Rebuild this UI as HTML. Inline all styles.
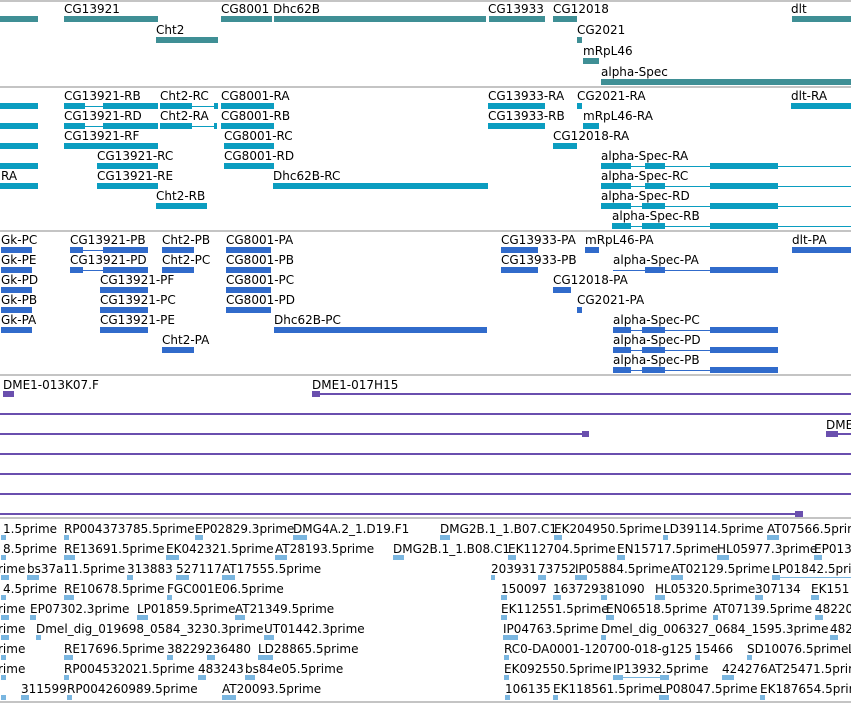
<!DOCTYPE html>
<html><head><meta charset="utf-8"><style>
body{margin:0;width:851px;height:703px;background:#fff;position:relative;overflow:hidden}
.t{position:absolute;font:12px/14px "DejaVu Sans","Liberation Sans",sans-serif;white-space:nowrap;color:#000;margin-top:1px}
.s{position:absolute;left:0;width:851px;height:2px;background:#c4c4c4}
.a{position:absolute;height:6px;background:#3f8f95}
.b{position:absolute;height:6px;background:#0b9dc0}
.bl{position:absolute;height:1px;background:#0b9dc0}
.c{position:absolute;height:6px;background:#316bcb}
.cl{position:absolute;height:1px;background:#316bcb}
.p{position:absolute;height:2px;background:#6a4fae}
.pb{position:absolute;height:6px;background:#6a4fae}
.e{position:absolute;height:5px;width:8px;background:#7ab6e0}
.el{position:absolute;height:1px;background:#7ab6e0}
</style></head><body>
<div class="s" style="top:0"></div>
<div class="s" style="top:86px"></div>
<div class="s" style="top:230px"></div>
<div class="s" style="top:374px"></div>
<div class="s" style="top:517px"></div>
<div class="s" style="top:701px"></div>

<!-- track 1 genes -->
<div class="a" style="left:0;top:16px;width:38px"></div>
<div class="t" style="left:64px;top:1px">CG13921</div><div class="a" style="left:64px;top:16px;width:94px"></div>
<div class="t" style="left:156px;top:22px">Cht2</div><div class="a" style="left:156px;top:37px;width:62px"></div>
<div class="t" style="left:221px;top:1px">CG8001</div><div class="a" style="left:221px;top:16px;width:51px"></div>
<div class="t" style="left:273px;top:1px">Dhc62B</div><div class="a" style="left:274px;top:16px;width:212px"></div>
<div class="t" style="left:488px;top:1px">CG13933</div><div class="a" style="left:489px;top:16px;width:56px"></div>
<div class="t" style="left:553px;top:1px">CG12018</div><div class="a" style="left:553px;top:16px;width:24px"></div>
<div class="t" style="left:577px;top:22px">CG2021</div><div class="a" style="left:577px;top:37px;width:5px"></div>
<div class="t" style="left:583px;top:43px">mRpL46</div><div class="a" style="left:583px;top:58px;width:16px"></div>
<div class="t" style="left:601px;top:64px">alpha-Spec</div><div class="a" style="left:601px;top:79px;width:250px"></div>
<div class="t" style="left:791px;top:1px">dlt</div><div class="a" style="left:792px;top:16px;width:59px"></div>

<!-- track 2 transcripts -->
<div class="b" style="left:0;top:103px;width:38px"></div>
<div class="b" style="left:0;top:123px;width:38px"></div>
<div class="b" style="left:0;top:143px;width:38px"></div>
<div class="b" style="left:0;top:163px;width:38px"></div>
<div class="t" style="left:1px;top:168px">RA</div>
<div class="b" style="left:0;top:183px;width:38px"></div>
<div class="t" style="left:64px;top:88px">CG13921-RB</div><div class="b" style="left:64px;top:103px;width:21px"></div><div class="bl" style="left:85px;top:106px;width:18px"></div><div class="b" style="left:103px;top:103px;width:55px"></div>
<div class="t" style="left:64px;top:108px">CG13921-RD</div><div class="b" style="left:64px;top:123px;width:21px"></div><div class="bl" style="left:85px;top:126px;width:18px"></div><div class="b" style="left:103px;top:123px;width:55px"></div>
<div class="t" style="left:64px;top:128px">CG13921-RF</div><div class="b" style="left:64px;top:143px;width:94px"></div>
<div class="t" style="left:97px;top:148px">CG13921-RC</div><div class="b" style="left:97px;top:163px;width:61px"></div>
<div class="t" style="left:97px;top:168px">CG13921-RE</div><div class="b" style="left:97px;top:183px;width:61px"></div>
<div class="t" style="left:160px;top:88px">Cht2-RC</div><div class="b" style="left:160px;top:103px;width:32px"></div><div class="bl" style="left:192px;top:106px;width:24px"></div><div class="b" style="left:214px;top:103px;width:4px"></div>
<div class="t" style="left:160px;top:108px">Cht2-RA</div><div class="b" style="left:160px;top:123px;width:32px"></div><div class="bl" style="left:192px;top:126px;width:24px"></div><div class="b" style="left:214px;top:123px;width:3px"></div>
<div class="t" style="left:156px;top:188px">Cht2-RB</div><div class="b" style="left:156px;top:203px;width:51px"></div>
<div class="t" style="left:221px;top:88px">CG8001-RA</div><div class="b" style="left:221px;top:103px;width:53px"></div>
<div class="t" style="left:221px;top:108px">CG8001-RB</div><div class="b" style="left:221px;top:123px;width:53px"></div>
<div class="t" style="left:224px;top:128px">CG8001-RC</div><div class="b" style="left:224px;top:143px;width:50px"></div>
<div class="t" style="left:224px;top:148px">CG8001-RD</div><div class="b" style="left:224px;top:163px;width:50px"></div>
<div class="t" style="left:273px;top:168px">Dhc62B-RC</div><div class="b" style="left:273px;top:183px;width:215px"></div>
<div class="t" style="left:488px;top:88px">CG13933-RA</div><div class="b" style="left:488px;top:103px;width:57px"></div>
<div class="t" style="left:488px;top:108px">CG13933-RB</div><div class="b" style="left:488px;top:123px;width:57px"></div>
<div class="t" style="left:577px;top:88px">CG2021-RA</div><div class="b" style="left:577px;top:103px;width:5px"></div>
<div class="t" style="left:583px;top:108px">mRpL46-RA</div><div class="b" style="left:583px;top:123px;width:16px"></div>
<div class="t" style="left:553px;top:128px">CG12018-RA</div><div class="b" style="left:553px;top:143px;width:24px"></div>
<div class="t" style="left:791px;top:88px">dlt-RA</div><div class="b" style="left:791px;top:103px;width:60px"></div>

<div class="t" style="left:601px;top:148px">alpha-Spec-RA</div>
<div class="b" style="left:601px;top:163px;width:30px"></div><div class="b" style="left:645px;top:163px;width:20px"></div><div class="b" style="left:710px;top:163px;width:68px"></div><div class="bl" style="left:601px;top:166px;width:250px"></div>
<div class="t" style="left:601px;top:168px">alpha-Spec-RC</div>
<div class="b" style="left:601px;top:183px;width:30px"></div><div class="b" style="left:645px;top:183px;width:20px"></div><div class="b" style="left:710px;top:183px;width:68px"></div><div class="bl" style="left:601px;top:186px;width:250px"></div>
<div class="t" style="left:601px;top:188px">alpha-Spec-RD</div>
<div class="b" style="left:601px;top:203px;width:30px"></div><div class="b" style="left:642px;top:203px;width:23px"></div><div class="b" style="left:710px;top:203px;width:68px"></div><div class="bl" style="left:601px;top:206px;width:250px"></div>
<div class="t" style="left:612px;top:208px">alpha-Spec-RB</div>
<div class="b" style="left:612px;top:223px;width:19px"></div><div class="b" style="left:642px;top:223px;width:23px"></div><div class="b" style="left:710px;top:223px;width:68px"></div><div class="bl" style="left:612px;top:226px;width:239px"></div>

<!-- track 3 -->
<div class="t" style="left:1px;top:232px">Gk-PC</div><div class="c" style="left:1px;top:247px;width:31px"></div>
<div class="t" style="left:1px;top:252px">Gk-PE</div><div class="c" style="left:1px;top:267px;width:31px"></div>
<div class="t" style="left:1px;top:272px">Gk-PD</div><div class="c" style="left:1px;top:287px;width:31px"></div>
<div class="t" style="left:1px;top:292px">Gk-PB</div><div class="c" style="left:1px;top:307px;width:31px"></div>
<div class="t" style="left:1px;top:312px">Gk-PA</div><div class="c" style="left:1px;top:327px;width:31px"></div>
<div class="t" style="left:70px;top:232px">CG13921-PB</div><div class="c" style="left:70px;top:247px;width:13px"></div><div class="cl" style="left:83px;top:250px;width:20px"></div><div class="c" style="left:103px;top:247px;width:45px"></div>
<div class="t" style="left:70px;top:252px">CG13921-PD</div><div class="c" style="left:70px;top:267px;width:13px"></div><div class="cl" style="left:83px;top:270px;width:20px"></div><div class="c" style="left:103px;top:267px;width:45px"></div>
<div class="t" style="left:100px;top:272px">CG13921-PF</div><div class="c" style="left:100px;top:287px;width:48px"></div>
<div class="t" style="left:100px;top:292px">CG13921-PC</div><div class="c" style="left:100px;top:307px;width:48px"></div>
<div class="t" style="left:100px;top:312px">CG13921-PE</div><div class="c" style="left:100px;top:327px;width:48px"></div>
<div class="t" style="left:162px;top:232px">Cht2-PB</div><div class="c" style="left:162px;top:247px;width:32px"></div>
<div class="t" style="left:162px;top:252px">Cht2-PC</div><div class="c" style="left:162px;top:267px;width:32px"></div>
<div class="t" style="left:162px;top:332px">Cht2-PA</div><div class="c" style="left:162px;top:347px;width:32px"></div>
<div class="t" style="left:226px;top:232px">CG8001-PA</div><div class="c" style="left:226px;top:247px;width:45px"></div>
<div class="t" style="left:226px;top:252px">CG8001-PB</div><div class="c" style="left:226px;top:267px;width:45px"></div>
<div class="t" style="left:226px;top:272px">CG8001-PC</div><div class="c" style="left:226px;top:287px;width:45px"></div>
<div class="t" style="left:226px;top:292px">CG8001-PD</div><div class="c" style="left:226px;top:307px;width:45px"></div>
<div class="t" style="left:274px;top:312px">Dhc62B-PC</div><div class="c" style="left:274px;top:327px;width:213px"></div>
<div class="t" style="left:501px;top:232px">CG13933-PA</div><div class="c" style="left:501px;top:247px;width:37px"></div>
<div class="t" style="left:501px;top:252px">CG13933-PB</div><div class="c" style="left:501px;top:267px;width:37px"></div>
<div class="t" style="left:585px;top:232px">mRpL46-PA</div><div class="c" style="left:585px;top:247px;width:14px"></div>
<div class="t" style="left:553px;top:272px">CG12018-PA</div><div class="c" style="left:553px;top:287px;width:18px"></div>
<div class="t" style="left:577px;top:292px">CG2021-PA</div><div class="c" style="left:577px;top:307px;width:5px"></div>
<div class="t" style="left:792px;top:232px">dlt-PA</div><div class="c" style="left:792px;top:247px;width:59px"></div>
<div class="t" style="left:613px;top:252px">alpha-Spec-PA</div><div class="cl" style="left:613px;top:270px;width:165px"></div><div class="c" style="left:645px;top:267px;width:20px"></div><div class="c" style="left:710px;top:267px;width:68px"></div>
<div class="t" style="left:613px;top:312px">alpha-Spec-PC</div><div class="cl" style="left:613px;top:330px;width:165px"></div><div class="c" style="left:613px;top:327px;width:18px"></div><div class="c" style="left:642px;top:327px;width:23px"></div><div class="c" style="left:710px;top:327px;width:68px"></div>
<div class="t" style="left:613px;top:332px">alpha-Spec-PD</div><div class="cl" style="left:613px;top:350px;width:165px"></div><div class="c" style="left:613px;top:347px;width:18px"></div><div class="c" style="left:642px;top:347px;width:23px"></div><div class="c" style="left:710px;top:347px;width:68px"></div>
<div class="t" style="left:613px;top:352px">alpha-Spec-PB</div><div class="cl" style="left:613px;top:370px;width:165px"></div><div class="c" style="left:613px;top:367px;width:18px"></div><div class="c" style="left:642px;top:367px;width:23px"></div><div class="c" style="left:710px;top:367px;width:68px"></div>

<!-- track 4 -->
<div class="t" style="left:3px;top:377px">DME1-013K07.F</div><div class="pb" style="left:3px;top:391px;width:11px"></div>
<div class="t" style="left:312px;top:377px">DME1-017H15</div><div class="pb" style="left:312px;top:391px;width:8px"></div><div class="p" style="left:312px;top:393px;width:539px"></div>
<div class="p" style="left:0;top:413px;width:851px"></div>
<div class="p" style="left:0;top:433px;width:589px"></div><div class="pb" style="left:582px;top:431px;width:7px"></div>
<div class="t" style="left:826px;top:417px">DME</div><div class="pb" style="left:826px;top:431px;width:12px"></div><div class="p" style="left:826px;top:433px;width:25px"></div>
<div class="p" style="left:0;top:453px;width:851px"></div>
<div class="p" style="left:0;top:473px;width:851px"></div>
<div class="p" style="left:0;top:493px;width:851px"></div>
<div class="p" style="left:0;top:513px;width:803px"></div><div class="pb" style="left:795px;top:511px;width:8px"></div>

<!-- ESTs -->
<div class="t" style="left:3px;top:521px">1.5prime</div><div class="t" style="left:64px;top:521px">RP004373785.5prime</div><div class="t" style="left:195px;top:521px">EP02829.3prime</div><div class="t" style="left:293px;top:521px">DMG4A.2_1.D19.F1</div><div class="t" style="left:440px;top:521px">DMG2B.1_1.B07.C1</div><div class="t" style="left:554px;top:521px">EK204950.5prime</div><div class="t" style="left:663px;top:521px">LD39114.5prime</div><div class="t" style="left:767px;top:521px">AT07566.5prime</div>
<div class="t" style="left:3px;top:541px">8.5prime</div><div class="t" style="left:64px;top:541px">RE13691.5prime</div><div class="t" style="left:166px;top:541px">EK042321.5prime</div><div class="t" style="left:275px;top:541px">AT28193.5prime</div><div class="t" style="left:393px;top:541px">DMG2B.1_1.B08.C1</div><div class="t" style="left:508px;top:541px">EK112704.5prime</div><div class="t" style="left:617px;top:541px">EN15717.5prime</div><div class="t" style="left:717px;top:541px">HL05977.3prime</div><div class="t" style="left:814px;top:541px">EP013</div>
<div class="t" style="left:-2px;top:561px">rime</div><div class="t" style="left:27px;top:561px">bs37a11.5prime</div><div class="t" style="left:127px;top:561px">313883</div><div class="t" style="left:176px;top:561px">527117</div><div class="t" style="left:222px;top:561px">AT17555.5prime</div><div class="t" style="left:491px;top:561px">203931</div><div class="t" style="left:538px;top:561px">73752</div><div class="t" style="left:575px;top:561px">IP05884.5prime</div><div class="t" style="left:671px;top:561px">AT02129.5prime</div><div class="t" style="left:772px;top:561px">LP01842.5prime</div>
<div class="t" style="left:3px;top:581px">4.5prime</div><div class="t" style="left:64px;top:581px">RE10678.5prime</div><div class="t" style="left:167px;top:581px">FGC001E06.5prime</div><div class="t" style="left:501px;top:581px">150097</div><div class="t" style="left:553px;top:581px">163729381090</div><div class="t" style="left:655px;top:581px">HL05320.5prime</div><div class="t" style="left:755px;top:581px">307134</div><div class="t" style="left:811px;top:581px">EK151</div>
<div class="t" style="left:-2px;top:601px">rime</div><div class="t" style="left:30px;top:601px">EP07302.3prime</div><div class="t" style="left:137px;top:601px">LP01859.5prime</div><div class="t" style="left:235px;top:601px">AT21349.5prime</div><div class="t" style="left:501px;top:601px">EK112551.5prime</div><div class="t" style="left:606px;top:601px">EN06518.5prime</div><div class="t" style="left:713px;top:601px">AT07139.5prime</div><div class="t" style="left:815px;top:601px">48220</div>
<div class="t" style="left:-2px;top:621px">rime</div><div class="t" style="left:36px;top:621px">Dmel_dig_019698_0584_3230.3prime</div><div class="t" style="left:264px;top:621px">UT01442.3prime</div><div class="t" style="left:503px;top:621px">IP04763.5prime</div><div class="t" style="left:601px;top:621px">Dmel_dig_006327_0684_1595.3prime</div><div class="t" style="left:830px;top:621px">482</div>
<div class="t" style="left:-2px;top:641px">rime</div><div class="t" style="left:64px;top:641px">RE17696.5prime</div><div class="t" style="left:167px;top:641px">38229236480</div><div class="t" style="left:258px;top:641px">LD28865.5prime</div><div class="t" style="left:504px;top:641px">RC0-DA0001-120700-018-g125</div><div class="t" style="left:695px;top:641px">15466</div><div class="t" style="left:747px;top:641px">SD10076.5prime</div><div class="t" style="left:848px;top:641px">L</div>
<div class="t" style="left:-2px;top:661px">rime</div><div class="t" style="left:64px;top:661px">RP004532021.5prime</div><div class="t" style="left:198px;top:661px">483243</div><div class="t" style="left:245px;top:661px">bs84e05.5prime</div><div class="t" style="left:504px;top:661px">EK092550.5prime</div><div class="t" style="left:613px;top:661px">IP13932.5prime</div><div class="t" style="left:722px;top:661px">424276</div><div class="t" style="left:768px;top:661px">AT25471.5prime</div>
<div class="t" style="left:21px;top:681px">311599</div><div class="t" style="left:67px;top:681px">RP004260989.5prime</div><div class="t" style="left:222px;top:681px">AT20093.5prime</div><div class="t" style="left:505px;top:681px">106135</div><div class="t" style="left:553px;top:681px">EK118561.5prime</div><div class="t" style="left:659px;top:681px">LP08047.5prime</div><div class="t" style="left:760px;top:681px">EK187654.5prime</div>

<!-- EST glyphs -->
<div class="e" style="left:1px;top:535px;width:5px"></div><div class="e" style="left:64px;top:535px;width:5px"></div><div class="e" style="left:195px;top:535px"></div><div class="e" style="left:293px;top:535px;width:14px"></div><div class="e" style="left:440px;top:535px;width:10px"></div><div class="e" style="left:554px;top:535px"></div><div class="e" style="left:663px;top:535px;width:5px"></div><div class="e" style="left:767px;top:535px;width:12px"></div>
<div class="e" style="left:1px;top:555px;width:5px"></div><div class="e" style="left:64px;top:555px;width:11px"></div><div class="e" style="left:166px;top:555px;width:13px"></div><div class="e" style="left:275px;top:555px;width:12px"></div><div class="e" style="left:393px;top:555px;width:11px"></div><div class="e" style="left:508px;top:555px"></div><div class="e" style="left:617px;top:555px"></div><div class="e" style="left:717px;top:555px;width:12px"></div><div class="e" style="left:814px;top:555px"></div>
<div class="e" style="left:1px;top:575px"></div><div class="e" style="left:27px;top:575px;width:12px"></div><div class="e" style="left:127px;top:575px;width:6px"></div><div class="e" style="left:176px;top:575px;width:13px"></div><div class="e" style="left:222px;top:575px;width:13px"></div><div class="e" style="left:491px;top:575px;width:4px"></div><div class="e" style="left:538px;top:575px"></div><div class="e" style="left:575px;top:575px;width:12px"></div><div class="e" style="left:671px;top:575px;width:12px"></div><div class="el" style="left:772px;top:577px;width:79px"></div><div class="e" style="left:772px;top:575px;width:8px"></div>
<div class="e" style="left:1px;top:595px;width:5px"></div><div class="e" style="left:64px;top:595px;width:10px"></div><div class="e" style="left:167px;top:595px;width:5px"></div><div class="e" style="left:501px;top:595px;width:6px"></div><div class="e" style="left:553px;top:595px"></div><div class="e" style="left:601px;top:595px;width:6px"></div><div class="e" style="left:655px;top:595px;width:10px"></div><div class="e" style="left:755px;top:595px"></div><div class="e" style="left:811px;top:595px"></div>
<div class="e" style="left:1px;top:615px"></div><div class="e" style="left:30px;top:615px;width:6px"></div><div class="e" style="left:137px;top:615px;width:11px"></div><div class="e" style="left:235px;top:615px;width:10px"></div><div class="e" style="left:501px;top:615px;width:6px"></div><div class="e" style="left:606px;top:615px"></div><div class="e" style="left:713px;top:615px;width:5px"></div><div class="e" style="left:815px;top:615px"></div>
<div class="e" style="left:1px;top:635px"></div><div class="e" style="left:36px;top:635px;width:5px"></div><div class="e" style="left:264px;top:635px;width:10px"></div><div class="e" style="left:503px;top:635px;width:15px"></div><div class="e" style="left:601px;top:635px;width:5px"></div><div class="e" style="left:830px;top:635px"></div>
<div class="e" style="left:1px;top:655px;width:5px"></div><div class="e" style="left:64px;top:655px;width:9px"></div><div class="e" style="left:167px;top:655px;width:6px"></div><div class="e" style="left:207px;top:655px;width:8px"></div><div class="e" style="left:258px;top:655px;width:15px"></div><div class="e" style="left:504px;top:655px;width:5px"></div><div class="e" style="left:695px;top:655px;width:5px"></div><div class="e" style="left:747px;top:655px;width:5px"></div>
<div class="e" style="left:1px;top:675px;width:5px"></div><div class="e" style="left:64px;top:675px;width:5px"></div><div class="e" style="left:198px;top:675px"></div><div class="e" style="left:245px;top:675px;width:10px"></div><div class="e" style="left:504px;top:675px;width:5px"></div><div class="el" style="left:613px;top:677px;width:50px"></div><div class="e" style="left:613px;top:675px;width:10px"></div><div class="e" style="left:660px;top:675px;width:9px"></div><div class="e" style="left:722px;top:675px;width:12px"></div>
<div class="e" style="left:1px;top:695px;width:5px"></div><div class="e" style="left:21px;top:695px;width:8px"></div><div class="e" style="left:67px;top:695px;width:5px"></div><div class="e" style="left:222px;top:695px;width:14px"></div><div class="e" style="left:505px;top:695px;width:5px"></div><div class="e" style="left:553px;top:695px;width:5px"></div><div class="e" style="left:659px;top:695px;width:10px"></div><div class="e" style="left:760px;top:695px;width:5px"></div>
</body></html>
